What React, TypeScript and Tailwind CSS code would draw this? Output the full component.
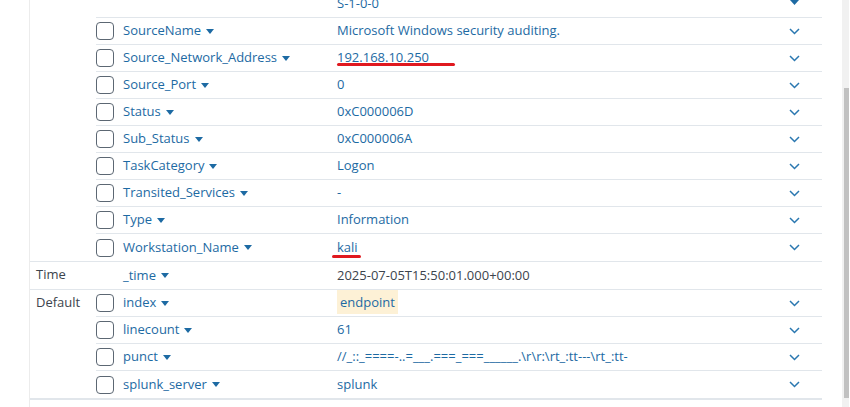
import React from "react";

type Row = { name?: string; value: string; check?: boolean; chevron?: boolean; highlight?: boolean; gray?: boolean };

const Caret = () => (
  <svg width="8" height="5" viewBox="0 0 8 5" className="ml-[5px] shrink-0">
    <path d="M0 0 L8 0 L4 5 Z" fill="#1d6aa3" />
  </svg>
);

const Chevron = () => (
  <svg width="11" height="7" viewBox="0 0 11 7">
    <path d="M1 1 L5.5 5.5 L10 1" fill="none" stroke="#2a77b0" strokeWidth="1.5" />
  </svg>
);

const FieldRow = ({ r, last }: { r: Row; last: boolean }) => (
  <div className={`flex h-[27px] items-center ${last ? "" : "border-b border-[#e1e6eb]"}`}>
    <div className="w-[27px] shrink-0 flex items-center">
      {r.check !== false && r.name && (
        <div className="w-[18px] h-[18px] rounded-[4px] border border-[#5c6773] bg-white" />
      )}
    </div>
    <div className="w-[214px] shrink-0 flex items-center text-[#1d6aa3]">
      {r.name && (
        <>
          <span>{r.name}</span>
          <Caret />
        </>
      )}
    </div>
    <div className="flex-1 min-w-0 whitespace-nowrap">
      {r.highlight ? (
        <span className="bg-[#fdf1d6] text-[#1d6aa3] px-[3px] py-[3px]">{r.value}</span>
      ) : (
        <span className={r.gray ? "text-[#3c444d]" : "text-[#1d6aa3]"}>{r.value}</span>
      )}
    </div>
    <div className="w-[34px] shrink-0 flex items-center justify-start pl-[1px]">
      {r.chevron !== false && <Chevron />}
    </div>
  </div>
);

const Group = ({ label, rows, bottom }: { label?: string; rows: Row[]; bottom?: string }) => (
  <div className={`flex ${bottom ?? "border-b border-[#e1e6eb]"}`}>
    <div className="w-[66px] shrink-0 pl-[6px] text-[#3c444d] h-[26px] flex items-center">{label}</div>
    <div className="flex-1">
      {rows.map((r, i) => (
        <FieldRow key={i} r={r} last={i === rows.length - 1} />
      ))}
    </div>
  </div>
);

export default function App() {
  const g1: Row[] = [
    { name: "SourceName", value: "Microsoft Windows security auditing." },
    { name: "Source_Network_Address", value: "192.168.10.250" },
    { name: "Source_Port", value: "0" },
    { name: "Status", value: "0xC000006D" },
    { name: "Sub_Status", value: "0xC000006A" },
    { name: "TaskCategory", value: "Logon" },
    { name: "Transited_Services", value: "-" },
    { name: "Type", value: "Information" },
    { name: "Workstation_Name", value: "kali" },
  ];
  const time: Row[] = [{ name: "_time", value: "2025-07-05T15:50:01.000+00:00", check: false, chevron: false, gray: true }];
  const def: Row[] = [
    { name: "index", value: "endpoint", highlight: true },
    { name: "linecount", value: "61" },
    { name: "punct", value: "//_::_====-..=___.===_===______.\\r\\r:\\rt_:tt---\\rt_:tt-" },
    { name: "splunk_server", value: "splunk" },
  ];
  return (
    <div
      className="w-[850px] h-[407px] overflow-hidden bg-white flex text-[13px] relative"
      style={{ fontFamily: "'Open Sans', 'Liberation Sans', sans-serif" }}
    >
      <div className="w-[30px] shrink-0 bg-white" />
      <div className="w-[793px] shrink-0 border-l border-[#ececec] -ml-[1px]">
        <div className="-mt-[9px]">
          <div className="flex h-[27px] items-center border-b border-[#e1e6eb] ml-[66px]">
            <div className="w-[241px] shrink-0" />
            <div className="flex-1 text-[#1d6aa3]">S-1-0-0</div>
            <div className="w-[34px] shrink-0 pl-[2px] -mt-[4px]">
              <svg width="9" height="5" viewBox="0 0 9 5">
                <path d="M0 0 L9 0 L4.5 5 Z" fill="#1d6aa3" />
              </svg>
            </div>
          </div>
          <Group rows={g1} />
          <Group label="Time" rows={time} />
          <Group label="Default" rows={def} bottom="border-b-2 border-[#e1e6eb]" />
        </div>
      </div>
      <div className="w-[20px] shrink-0 bg-white" />
      <div className="w-[7px] shrink-0 bg-[#f1f1f1] flex flex-col">
        <div className="h-[88px] shrink-0" />
        <div className="h-[310px] shrink-0 bg-[#c1c1c1] ml-[2px]" />
      </div>
      <div className="absolute left-[337px] top-[63px] w-[118px] h-[3px] rounded-full bg-[#e0191f]" />
      <div className="absolute left-[332px] top-[255px] w-[29px] h-[3px] rounded-full bg-[#e0191f]" />
    </div>
  );
}
